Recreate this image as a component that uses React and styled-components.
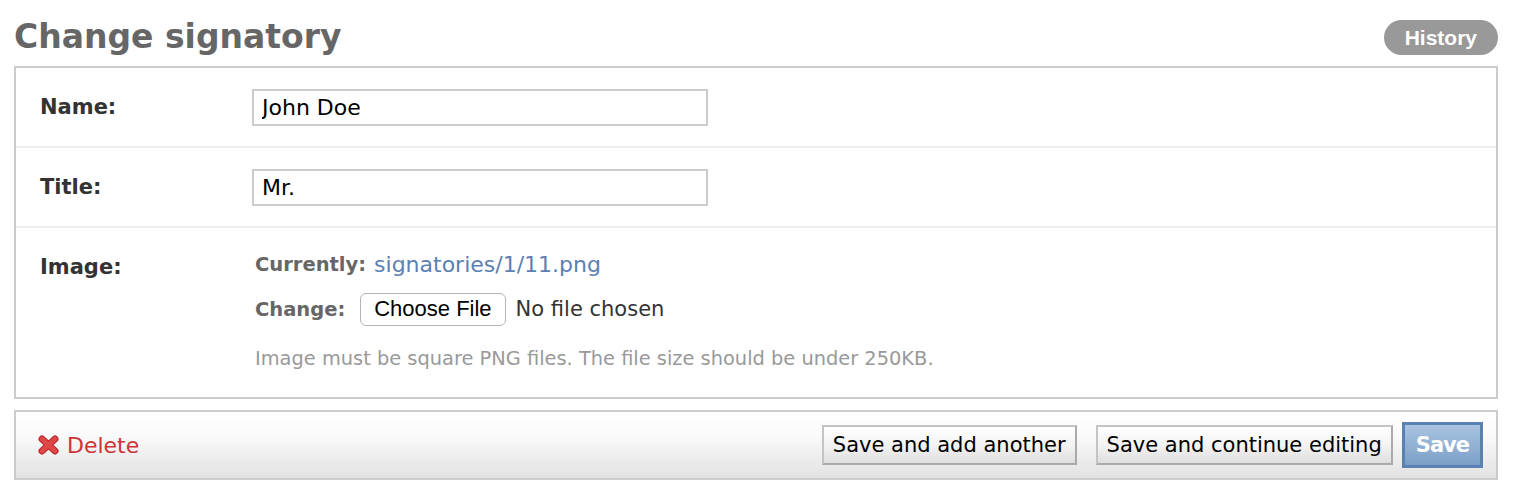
import styled, { createGlobalStyle } from "styled-components";

const GlobalStyle = createGlobalStyle`
  body {
    margin: 0;
    background: #fff;
    font-family: "DejaVu Sans", "Liberation Sans", sans-serif;
  }
`;

const Page = styled.div`
  padding: 0 18px 0 14px;
`;

const Header = styled.div`
  display: flex;
  justify-content: space-between;
  align-items: flex-start;
`;

const Title = styled.h1`
  margin: 18px 0 10px;
  font-size: 33px;
  line-height: 38px;
  font-weight: bold;
  color: #666;
`;

const HistoryLink = styled.a`
  margin-top: 20px;
  height: 35px;
  padding: 0 21px;
  border-radius: 18px;
  background: #999;
  color: #fff;
  font-family: "Liberation Sans", Arial, sans-serif;
  font-weight: bold;
  font-size: 21px;
  line-height: 35px;
  text-decoration: none;
`;

const Fieldset = styled.div`
  border: 2px solid #ccc;
`;

const Row = styled.div`
  display: flex;
  align-items: flex-start;
  padding: ${(p) => (p.$top ? p.$top : 21)}px 24px 20px;
  border-bottom: ${(p) => (p.$last ? "none" : "2px solid #eee")};
`;

const Label = styled.label`
  width: 212px;
  flex-shrink: 0;
  font-size: 21px;
  font-weight: bold;
  color: #333;
  line-height: ${(p) => (p.$lh ? p.$lh : 37)}px;
`;

const TextInput = styled.input`
  box-sizing: border-box;
  width: 456px;
  height: 37px;
  padding: 0 8px;
  border: 2px solid #ccc;
  font-family: "DejaVu Sans", sans-serif;
  font-size: 22px;
  color: #000;
  outline: none;
`;

const FileBlock = styled.div`
  display: flex;
  flex-direction: column;
  padding-left: 3px;
`;

const FileLine = styled.div`
  display: flex;
  align-items: center;
  height: ${(p) => p.$h}px;
  margin-bottom: ${(p) => (p.$mb ? p.$mb : 0)}px;
  font-size: 22px;
`;

const SubLabel = styled.span`
  font-size: 19.5px;
  font-weight: bold;
  color: #666;
  margin-right: ${(p) => (p.$gap ? p.$gap : 8)}px;
`;

const FileLink = styled.a`
  color: #5b80b2;
  text-decoration: none;
`;

const ChooseButton = styled.button`
  box-sizing: border-box;
  height: 33px;
  padding: 0 13px;
  border: 1px solid #b5b5b5;
  border-radius: 6px;
  background: #fff;
  font-family: "Liberation Sans", Arial, sans-serif;
  font-size: 22px;
  color: #000;
  margin-right: 10px;
`;

const NoFile = styled.span`
  font-size: 21px;
  color: #333;
`;

const Help = styled.p`
  margin: 12px 0 0;
  line-height: 36px;
  font-size: 19.4px;
  color: #999;
`;

const SubmitRow = styled.div`
  display: flex;
  align-items: center;
  height: 66px;
  margin-top: 11px;
  padding: 0 13px 0 22px;
  border: 2px solid #ccc;
  background: linear-gradient(#fff 0%, #fafafa 35%, #e2e2e2 100%);
`;

const DeleteLink = styled.a`
  display: flex;
  align-items: center;
  gap: 8px;
  margin-right: auto;
  color: #cc3434;
  font-size: 22px;
  text-decoration: none;
`;

const Button = styled.button`
  box-sizing: border-box;
  height: ${(p) => (p.$primary ? 46 : 40)}px;
  margin-left: ${(p) => (p.$primary ? 9 : 19)}px;
  padding: 0 ${(p) => (p.$primary ? 11 : 9)}px;
  border: ${(p) => (p.$primary ? "3px solid #5b80b2" : "2px solid #c4c4c4")};
  border-bottom-color: ${(p) => (p.$primary ? "#5b80b2" : "#aaa")};
  border-right-color: ${(p) => (p.$primary ? "#5b80b2" : "#aaa")};
  background: ${(p) =>
    p.$primary
      ? "linear-gradient(#a9c4e0, #7c9fc8)"
      : "linear-gradient(#fff, #f3f3f3 50%, #dedede)"};
  color: ${(p) => (p.$primary ? "#fff" : "#000")};
  font-family: "DejaVu Sans", sans-serif;
  font-size: 21px;
  font-weight: ${(p) => (p.$primary ? "bold" : "normal")};
  letter-spacing: ${(p) => (p.$primary ? "-1px" : "0")};
`;

const DeleteIcon = () => (
  <svg width="21" height="20" viewBox="0 0 21 20">
    <g strokeLinecap="round">
      <path d="M4 4 L17 16 M17 4 L4 16" stroke="#b92a2a" strokeWidth="7" />
      <path d="M4 4 L17 16 M17 4 L4 16" stroke="#e04848" strokeWidth="4.5" />
    </g>
  </svg>
);

const App = () => (
  <Page>
    <GlobalStyle />
    <Header>
      <Title>Change signatory</Title>
      <HistoryLink href="#">History</HistoryLink>
    </Header>
    <Fieldset>
      <Row>
        <Label>Name:</Label>
        <TextInput type="text" defaultValue="John Doe" />
      </Row>
      <Row>
        <Label>Title:</Label>
        <TextInput type="text" defaultValue="Mr." />
      </Row>
      <Row $top={20} $last>
        <Label $lh={38}>Image:</Label>
        <FileBlock>
          <FileLine $h={32} $mb={9}>
            <SubLabel>Currently:</SubLabel>
            <FileLink href="#">signatories/1/11.png</FileLink>
          </FileLine>
          <FileLine $h={40}>
            <SubLabel $gap={15}>Change:</SubLabel>
            <ChooseButton type="button">Choose File</ChooseButton>
            <NoFile>No file chosen</NoFile>
          </FileLine>
          <Help>Image must be square PNG files. The file size should be under 250KB.</Help>
        </FileBlock>
      </Row>
    </Fieldset>
    <SubmitRow>
      <DeleteLink href="#">
        <DeleteIcon />
        Delete
      </DeleteLink>
      <Button type="button">Save and add another</Button>
      <Button type="button">Save and continue editing</Button>
      <Button type="button" $primary>Save</Button>
    </SubmitRow>
  </Page>
);

export default App;
